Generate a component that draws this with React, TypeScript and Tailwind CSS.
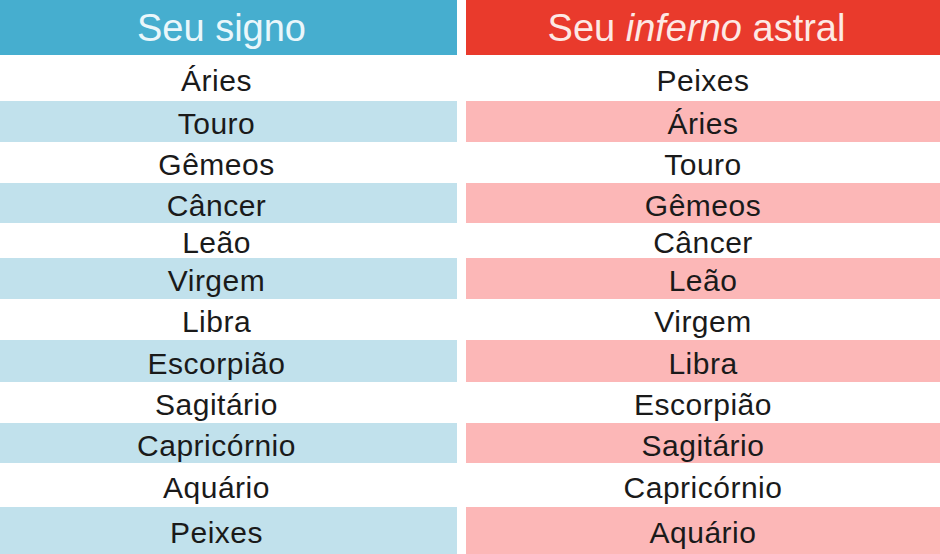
const rows = [
  { sign: "Áries", hell: "Peixes", h: "h-[45px]", tint: false },
  { sign: "Touro", hell: "Áries", h: "h-[41px]", tint: true },
  { sign: "Gêmeos", hell: "Touro", h: "h-[41px]", tint: false },
  { sign: "Câncer", hell: "Gêmeos", h: "h-[40px]", tint: true },
  { sign: "Leão", hell: "Câncer", h: "h-[35px]", tint: false },
  { sign: "Virgem", hell: "Leão", h: "h-[41px]", tint: true },
  { sign: "Libra", hell: "Virgem", h: "h-[41px]", tint: false },
  { sign: "Escorpião", hell: "Libra", h: "h-[42px]", tint: true },
  { sign: "Sagitário", hell: "Escorpião", h: "h-[41px]", tint: false },
  { sign: "Capricórnio", hell: "Sagitário", h: "h-[40px]", tint: true },
  { sign: "Aquário", hell: "Capricórnio", h: "h-[44px]", tint: false },
  { sign: "Peixes", hell: "Aquário", h: "h-[47px]", tint: true },
];

const font = { fontFamily: '"Liberation Sans", Arial, sans-serif' };

export default function App() {
  return (
    <div className="w-[940px] h-[554px] overflow-hidden bg-white" style={font}>
      <div className="flex gap-[9px] h-[55px]">
        <div className="w-[457px] bg-[#46aecf] flex items-center justify-center pr-[14px] pt-0.5 text-[38px] text-[#eaf7fb]">
          Seu signo
        </div>
        <div className="flex-1 bg-[#e93a2c] flex items-center justify-center pr-[13px] pt-0.5 text-[38px] text-[#fde9e5]">
          Seu&nbsp;<i>inferno</i>&nbsp;astral
        </div>
      </div>
      <div className="mt-px flex flex-col">
        {rows.map((r) => (
          <div key={r.sign} className={`flex gap-[9px] ${r.h}`}>
            <div
              className={`w-[457px] flex items-center justify-center pr-6 pt-1 text-[30px] tracking-[0.5px] text-[#1a1a1a] ${
                r.tint ? "bg-[#c1e1ec]" : "bg-white"
              }`}
            >
              {r.sign}
            </div>
            <div
              className={`flex-1 flex items-center justify-center pt-1 text-[30px] tracking-[0.5px] text-[#1a1a1a] ${
                r.tint ? "bg-[#fcb7b7]" : "bg-white"
              }`}
            >
              {r.hell}
            </div>
          </div>
        ))}
      </div>
    </div>
  );
}
